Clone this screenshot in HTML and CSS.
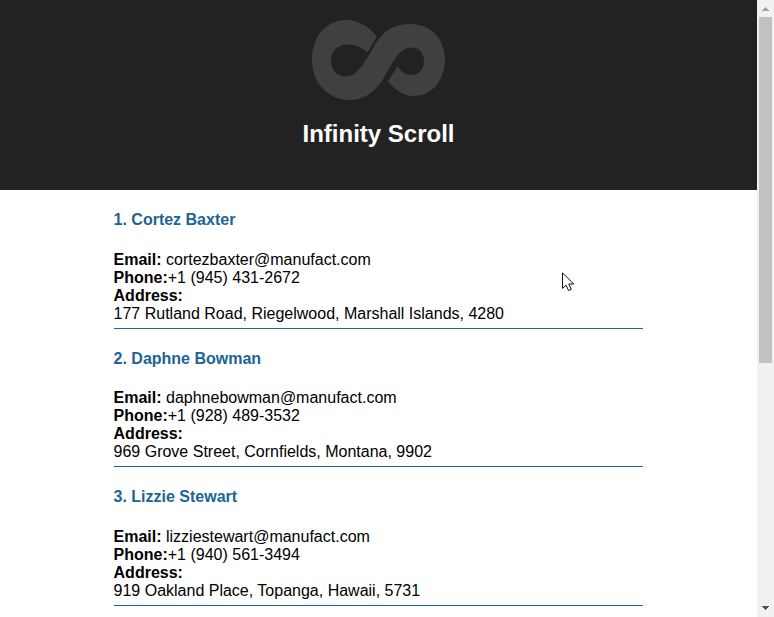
FILE: index.html
```html
<!DOCTYPE html>
<html lang="en">
<head>
<meta charset="utf-8">
<title>Infinity Scroll</title>
<link rel="stylesheet" href="styles.css">
</head>
<body>
<div class="viewport">
  <div class="page">
    <header class="header">
      <svg class="logo" width="133" height="80" viewBox="0 0 133 80">
        <path d="M64.700 16.500C56 5 45 0 34 0C14 0 0 17 0 39.500C0 63 16 80 38 80C51 80 62 73 70.500 60L80 43.500C86 33 92 27.500 100 27.500C107 27.500 112 33 112 41C112 49 107 55 100 55C94 55 89 51.500 85.500 46.500L76 61.500C83 70 92 76 102 76C120 76 133 60 133 39.500C133 18 118 4 98 4C84 4 74 9 66 20L56 36.500C49 48 43 56.500 34 56.500C25 56.500 19 50 19 40.500C19 30 26 24.500 36 24.500C44 24.500 50 28 55.500 32.500Z"/>
      </svg>
      <h1 class="title">Infinity Scroll</h1>
    </header>
    <main class="list">
      <article class="person">
        <h4 class="name">1. Cortez Baxter</h4>
        <div><b>Email:</b> cortezbaxter@manufact.com</div>
        <div><b>Phone:</b>+1 (945) 431-2672</div>
        <div><b>Address:</b></div>
        <div>177 Rutland Road, Riegelwood, Marshall Islands, 4280</div>
      </article>
      <article class="person">
        <h4 class="name">2. Daphne Bowman</h4>
        <div><b>Email:</b> daphnebowman@manufact.com</div>
        <div><b>Phone:</b>+1 (928) 489-3532</div>
        <div><b>Address:</b></div>
        <div>969 Grove Street, Cornfields, Montana, 9902</div>
      </article>
      <article class="person">
        <h4 class="name">3. Lizzie Stewart</h4>
        <div><b>Email:</b> lizziestewart@manufact.com</div>
        <div><b>Phone:</b>+1 (940) 561-3494</div>
        <div><b>Address:</b></div>
        <div>919 Oakland Place, Topanga, Hawaii, 5731</div>
      </article>
    </main>
  </div>
  <div class="scrollbar">
    <svg class="arrow arrow-up" width="17" height="17" viewBox="0 0 17 17" shape-rendering="crispEdges"><path d="M8 7h1v1h1v1h1v1h1v1H5v-1h1V9h1V8h1z"/></svg>
    <div class="thumb"></div>
    <svg class="arrow arrow-down" width="17" height="17" viewBox="0 0 17 17" shape-rendering="crispEdges"><path d="M5 6h7v1h-1v1h-1v1H9v1H8V9H7V8H6V7H5z"/></svg>
  </div>
  <svg class="cursor" width="13" height="20" viewBox="0 0 13 20"><path d="M.5.8V16.500L4 13.100L6.500 18.500L9.200 17.300L6.800 12H11.700Z"/></svg>
</div>
</body>
</html>
```

FILE: styles.css
```css
body {
  margin: 0;
  background: #fff;
  color: #000;
  font: 16px/18px "Liberation Sans", Arial, sans-serif;
}

.viewport {
  position: relative;
  display: flex;
  height: 617px;
  overflow: hidden;
}

.page {
  flex: 1;
  overflow: hidden;
}

.header {
  display: flex;
  flex-direction: column;
  align-items: center;
  box-sizing: border-box;
  height: 190px;
  padding-top: 20px;
  background: #222;
}

.logo {
  flex: none;
  fill: #404040;
}

.title {
  margin: 20px 0 0;
  color: #fff;
  font-size: 24px;
  line-height: 27px;
}

.list {
  width: 70%;
  margin: 0 auto;
}

.person {
  display: flow-root;
  padding-bottom: 5px;
  border-bottom: 1px solid #1c6796;
}

.name {
  margin: 21.28px 0;
  color: #206495;
}

.scrollbar {
  display: flex;
  flex-direction: column;
  width: 17px;
  background: #f1f1f1;
}

.thumb {
  width: 13px;
  height: 346px;
  margin: 0 auto;
  background: #c1c1c1;
}

.arrow {
  flex: none;
}

.arrow-up {
  fill: #a3a3a3;
}

.arrow-down {
  margin-top: auto;
  fill: #505050;
}

.cursor {
  position: absolute;
  left: 562px;
  top: 272px;
  fill: #fff;
  stroke: #111;
}
```
